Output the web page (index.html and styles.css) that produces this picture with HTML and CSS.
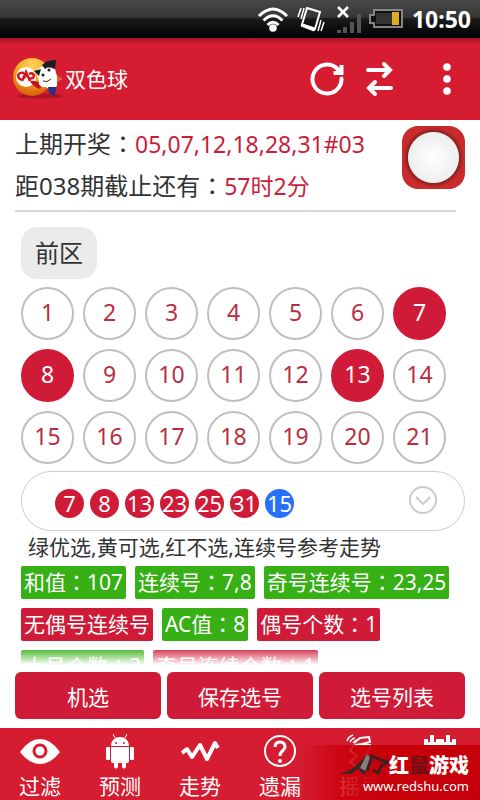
FILE: index.html
```html
<!DOCTYPE html>
<html lang="zh-CN">
<head>
  <meta charset="UTF-8">
  <meta name="viewport" content="width=device-width, initial-scale=1.0">
  <title>双色球</title>
  <link rel="stylesheet" href="styles.css">
</head>
<body>
  <!-- Status bar -->
  <div class="status-bar">
    <svg width="32" height="28" viewBox="0 0 32 28" fill="none" stroke="#fff" stroke-width="3">
      <path d="M2 11Q16 -3 30 11"/>
      <path d="M6.500 15.500Q16 6 25.500 15.500"/>
      <path d="M10.500 20Q16 14.500 21.500 20"/>
      <circle cx="16" cy="23" r="3.800" fill="#fff" stroke="none"/>
    </svg>
    <svg class="vibrate" width="28" height="28" viewBox="0 0 28 28" fill="none" stroke="#fff">
      <path d="M10 3L23 7L18 24L5 19.500Z" stroke-width="2"/>
      <path d="M5 19L18 23L17 26L4 21Z" fill="#fff"/>
      <path d="M4 3L1 12M7 3L4 14M24 15L21 26M27 17L24 26" stroke-width="1.500"/>
    </svg>
    <svg class="signal" width="28" height="29" viewBox="0 0 28 29">
      <path d="M2 25h4v3h-4zM8 22h4v6h-4zM15 17h4v11h-4zM22 9h4v19h-4z" fill="#555"/>
      <path d="M3 2L13 12M13 2L3 12" stroke="#fff" stroke-width="2.500"/>
    </svg>
    <svg class="battery" width="35" height="22" viewBox="0 0 35 22">
      <path d="M5 2H33V19H5V15H1V7H5Z" fill="#111" stroke="#858585" stroke-width="2"/>
      <path d="M7 5h16v11h-16z" fill="#333"/>
      <path d="M23 4h7v13h-7z" fill="#e2aa20"/>
    </svg>
    <span class="clock">10:50</span>
  </div>

  <!-- Title bar -->
  <header class="title-bar">
    <svg class="logo" width="53" height="44" viewBox="0 0 53 44">
      <defs>
        <radialGradient id="ball" cx="50%" cy="18%" r="85%">
          <stop offset="0" stop-color="#ffd45a"/>
          <stop offset="0.5" stop-color="#f7a521"/>
          <stop offset="1" stop-color="#d85508"/>
        </radialGradient>
      </defs>
      <ellipse cx="28" cy="39" rx="23" ry="2.500" fill="#9c1222" opacity="0.7"/>
      <circle cx="20" cy="20" r="19" fill="url(#ball)"/>
      <circle cx="14" cy="20" r="10" fill="#fff"/>
      <path d="M12 16C7 15 5 18 7 21C9 24 12 22 14 18M10 24L14 15L18 24M17 17C21 15 23 18 21 21L17 22" fill="none" stroke="#d51622" stroke-width="2.500"/>
      <path d="M18 24Q23 23 30 27L28 32Q20 29 18 24" fill="#c91020"/>
      <path d="M24 14Q28 8 35 10L43 12L45 19L49 22L45 25Q46 31 42 30L39 34L34 30Q26 31 27 24Z" fill="#fff"/>
      <path d="M30 8Q35 3 44 3L43 12Q38 8 33 12Z" fill="#172025"/>
      <path d="M22 14L29 12L27 19Z" fill="#172025"/>
      <path d="M45 18L51 22L45 25Z" fill="#ec5d30"/>
      <path d="M36 30L44 30L43 39Q36 37 36 30" fill="#23318f"/>
      <circle cx="31" cy="18" r="1.500" fill="#172025"/>
      <circle cx="37" cy="13" r="1.500" fill="#172025"/>
      <path d="M31 24Q35 26 39 22" fill="none" stroke="#333"/>
    </svg>
    <h1>双色球</h1>
    <div class="actions">
      <button class="icon-button" aria-label="刷新">
        <svg width="36" height="36" viewBox="0 0 36 36" fill="none" stroke="#fff" stroke-width="4" stroke-linecap="round">
          <path d="M32.500 17.500A14.500 14.500 0 1 1 28 7.500L31 11"/>
          <path d="M32.500 4V12H24.500" stroke-linecap="butt"/>
        </svg>
      </button>
      <button class="icon-button" aria-label="切换">
        <svg width="28" height="36" viewBox="0 0 28 36" fill="none" stroke="#fff" stroke-width="4" stroke-linecap="round">
          <path d="M3 9H25M19 3L25 9L19 15M26 27H4M10 21L4 27L10 33"/>
        </svg>
      </button>
      <button class="icon-button more" aria-label="更多">
        <svg width="10" height="36" viewBox="0 0 10 36" fill="#fff">
          <circle cx="5" cy="6" r="3.800"/>
          <circle cx="5" cy="18" r="3.800"/>
          <circle cx="5" cy="30" r="3.800"/>
        </svg>
      </button>
    </div>
  </header>

  <main class="content">
    <section class="draw">
      <div class="draw-info">
        <p>上期开奖<span class="colon" lang="zh-TW">：</span><span class="value">05,07,12,18,28,31#03</span></p>
        <p>距038期截止还有<span class="colon" lang="zh-TW">：</span><span class="value">57时2分</span></p>
      </div>
      <button class="round-button" aria-label="摇号"></button>
    </section>

    <section class="numbers">
      <h2 class="zone">前区</h2>
      <div class="balls">
        <button class="ball">1</button>
        <button class="ball">2</button>
        <button class="ball">3</button>
        <button class="ball">4</button>
        <button class="ball">5</button>
        <button class="ball">6</button>
        <button class="ball selected">7</button>
        <button class="ball selected">8</button>
        <button class="ball">9</button>
        <button class="ball">10</button>
        <button class="ball">11</button>
        <button class="ball">12</button>
        <button class="ball selected">13</button>
        <button class="ball">14</button>
        <button class="ball">15</button>
        <button class="ball">16</button>
        <button class="ball">17</button>
        <button class="ball">18</button>
        <button class="ball">19</button>
        <button class="ball">20</button>
        <button class="ball">21</button>
      </div>
    </section>

    <section class="picked">
      <span class="pick">7</span>
      <span class="pick">8</span>
      <span class="pick">13</span>
      <span class="pick">23</span>
      <span class="pick">25</span>
      <span class="pick">31</span>
      <span class="pick blue">15</span>
      <button class="icon-button expand" aria-label="展开">
        <svg width="30" height="30" viewBox="0 0 30 30" fill="none" stroke="#ccc" stroke-width="2">
          <circle cx="15" cy="15" r="13"/>
          <path d="M8 12L15 19L22 12"/>
        </svg>
      </button>
    </section>

    <p class="hint">绿优选,黄可选,红不选,连续号参考走势</p>

    <div class="tags">
      <span class="tag green">和值<span class="colon" lang="zh-TW">：</span>107</span>
      <span class="tag green">连续号<span class="colon" lang="zh-TW">：</span>7,8</span>
      <span class="tag green">奇号连续号<span class="colon" lang="zh-TW">：</span>23,25</span>
      <span class="tag">无偶号连续号</span>
      <span class="tag green">AC值<span class="colon" lang="zh-TW">：</span>8</span>
      <span class="tag">偶号个数<span class="colon" lang="zh-TW">：</span>1</span>
      <span class="tag green">大号个数<span class="colon" lang="zh-TW">：</span>3</span>
      <span class="tag">奇号连续个数<span class="colon" lang="zh-TW">：</span>1</span>
    </div>

    <div class="buttons">
      <button>机选</button>
      <button>保存选号</button>
      <button>选号列表</button>
    </div>
  </main>

  <!-- Bottom navigation -->
  <nav class="bottom-nav">
    <a href="#filter">
      <svg width="42" height="36" viewBox="0 0 42 36">
        <path d="M1 19Q10 6 21 6T41 19Q32 31 21 31T1 19Z" fill="#fff"/>
        <circle cx="21" cy="18" r="6" fill="none" stroke="#d51c31" stroke-width="3"/>
      </svg>
      过滤
    </a>
    <a href="#predict">
      <svg width="32" height="36" viewBox="0 0 32 36" fill="#fff">
        <path d="M7 13C7 1 25 1 25 13ZM7 14H25V28Q25 30 22 30V34Q20 37 18 34V30H14V34Q12 37 10 34V30Q7 30 7 28Z"/>
        <rect x="2" y="14" width="4" height="13" rx="1"/>
        <rect x="26" y="14" width="4" height="13" rx="1"/>
        <path d="M11 5L9 1M21 5L23 1" stroke="#fff"/>
        <circle cx="12" cy="10" r="1" fill="#d51c31"/>
        <circle cx="20" cy="10" r="1" fill="#d51c31"/>
      </svg>
      预测
    </a>
    <a href="#trend">
      <svg width="40" height="36" viewBox="0 0 40 36" fill="none" stroke="#fff" stroke-width="4" stroke-linejoin="round">
        <path d="M2 20L7 16L12 24L20 12L27 26L35 10L38 15"/>
      </svg>
      走势
    </a>
    <a href="#missing">
      <svg width="34" height="36" viewBox="0 0 34 36" fill="none" stroke="#fff">
        <circle cx="17" cy="18" r="15" stroke-width="2"/>
        <path d="M12 14Q12 9 17 9T22 14C22 18 17 17 17 23" stroke-width="3"/>
        <circle cx="17" cy="28" r="2" fill="#fff" stroke="none"/>
      </svg>
      遗漏
    </a>
    <a href="#shake">
      <svg width="40" height="36" viewBox="0 0 40 36" fill="none" stroke="#fff" stroke-width="2">
        <path d="M7 8Q8 4 13 2M10 9Q11 6 15 5M13 10Q14 8 17 7" stroke-width="1.500"/>
        <path d="M14 10L20 5L29 4L30 9L22 11L15 12H31"/>
        <path d="M14 12L10 18L17 23L10 29L17 34M31 13L25 22L28 30"/>
      </svg>
      摇号
    </a>
    <a href="#calendar" aria-label="日历">
      <svg width="34" height="36" viewBox="0 0 34 36">
        <path d="M1 6H33V34H1Z" fill="#fff"/>
        <path d="M9 2V9M25 2V9" stroke="#d51c31" stroke-width="8"/>
        <path d="M9 2V9M25 2V9" stroke="#fff" stroke-width="4"/>
      </svg>
    </a>
    <div class="badge">
      <div class="badge-name">
        <svg width="50" height="26" viewBox="0 0 50 26">
          <path d="M0 21Q15 18 28 1L34 7L25 22L19 16L12 21Z" fill="#3b2525"/>
          <path d="M28 1L33 7L27 18L21 15Z" fill="#858080"/>
          <path d="M28 18L33 3L42 7L49 9L43 12L39 20L34 17" fill="none" stroke="#3b2020" stroke-width="3"/>
        </svg>
        <strong>红<span class="dark">鼠</span>游戏</strong>
      </div>
      <span class="url">www.redshu.com</span>
    </div>
  </nav>
</body>
</html>
```

FILE: styles.css
```css
* {
  box-sizing: border-box;
}
body {
  font-family: "Noto Sans", "Noto Sans CJK SC", sans-serif;
  font-size: 21px;
  margin: 0;
  min-height: 100vh;
  display: flex;
  flex-direction: column;
  background: #fff;
  color: #333;
}
h1, h2, p {
  margin: 0;
  font-weight: normal;
}
button {
  font: inherit;
  padding: 0;
  border: none;
  cursor: pointer;
}
svg {
  display: block;
  flex-shrink: 0;
}
.colon {
  font-family: "Noto Sans", "Noto Sans CJK TC", sans-serif;
}

/* Status bar */
.status-bar {
  height: 38px;
  padding: 0 9px 0 0;
  display: flex;
  justify-content: flex-end;
  align-items: center;
  background: linear-gradient(#484848, #353535 45%, #1a1a1a 50%, #000);
  color: #fff;
}
.vibrate {
  margin-left: 8px;
}
.signal {
  margin-left: 10px;
}
.battery {
  margin-left: 6px;
}
.clock {
  margin-left: 8px;
  font-size: 23px;
  font-weight: bold;
}

/* Title bar */
.title-bar {
  height: 82px;
  padding: 0 28px 0 12px;
  display: flex;
  align-items: center;
  background: linear-gradient(#a01525, #d51c31 6px);
  color: #fff;
}
h1 {
  font-size: 21px;
  line-height: 32px;
}
.actions {
  display: flex;
  margin-left: auto;
}
.icon-button {
  background: none;
}
.actions .icon-button {
  margin-left: 20px;
}
.actions .more {
  margin-left: 49px;
}

/* Content */
.content {
  flex: 1;
  padding: 0 15px 9px;
  display: flex;
  flex-direction: column;
}
.draw {
  display: flex;
  justify-content: space-between;
}
.draw-info {
  flex: 1;
  font-size: 24px;
  line-height: 42px;
  padding: 3px 0;
  white-space: nowrap;
}
.draw-info .colon,
.value {
  line-height: 1;
}
.value {
  color: #c81e3a;
  font-size: 23px;
}
.round-button {
  width: 63px;
  height: 63px;
  margin-top: 6px;
  border-radius: 16px;
  background: radial-gradient(circle, #fff, #eee 25px, #8c2020 26px, #c92a2c 30px);
}
.numbers {
  margin: 0 9px 0 0;
  padding: 15px 0 0 6px;
  border-top: 2px solid #d8d8d8;
}
.zone {
  width: fit-content;
  padding: 8px 14px;
  border-radius: 16px;
  background: #ebebeb;
  font-size: 24px;
  line-height: 36px;
}
.balls {
  display: grid;
  grid-template-columns: repeat(7, 53px);
  gap: 9px;
  margin-top: 8px;
}
.ball {
  height: 53px;
  padding-bottom: 4px;
  border: 2px solid #bfbfbf;
  border-radius: 50%;
  background: #fff;
  color: #b82e40;
  font-size: 23px;
}
.ball.selected {
  border-color: #d01b38;
  background: #d01b38;
  color: #fff;
}
.picked {
  display: flex;
  align-items: center;
  gap: 6px;
  height: 60px;
  margin: 7px 0 0 6px;
  padding: 4px 26px 0 33px;
  border: 1px solid #ccc;
  border-radius: 30px;
}
.pick {
  width: 29px;
  height: 29px;
  border-radius: 50%;
  background: #d01b38;
  color: #fff;
  font-size: 22px;
  line-height: 29px;
  display: flex;
  justify-content: center;
}
.pick.blue {
  background: #2870fa;
}
.expand {
  margin: 0 0 6px auto;
}
.hint {
  padding-left: 13px;
  line-height: 32px;
}
.tags {
  position: relative;
  display: flex;
  flex-wrap: wrap;
  gap: 9px;
  height: 99px;
  margin: 3px 0 0 6px;
  overflow: hidden;
}
/* Fade out the last visible row */
.tags::after {
  content: "";
  position: absolute;
  left: 0;
  right: 0;
  bottom: 0;
  height: 16px;
  background: linear-gradient(rgba(255, 255, 255, 0.1), #fff);
}
.tag {
  height: 33px;
  padding: 0 3px;
  border-radius: 2px;
  background: #d01b38;
  color: #fff;
  line-height: 33px;
  white-space: nowrap;
}
.tag.green {
  background: #36b014;
}
.buttons {
  display: grid;
  grid-template-columns: repeat(3, 1fr);
  gap: 6px;
  margin-top: auto;
}
.buttons button {
  height: 47px;
  border-radius: 6px;
  background: #d01b38;
  color: #fff;
}

/* Bottom navigation */
.bottom-nav {
  position: relative;
  display: grid;
  grid-template-columns: repeat(6, 1fr);
  height: 72px;
  background: #d51c31;
}
.bottom-nav a {
  display: flex;
  flex-direction: column;
  align-items: center;
  gap: 4px;
  padding-top: 5px;
  color: #fff;
  line-height: 26px;
  text-decoration: none;
}
.badge {
  position: absolute;
  right: 0;
  bottom: 0;
  height: 55px;
  width: 180px;
  padding: 8px 11px 0 0;
  display: flex;
  flex-direction: column;
  align-items: flex-end;
  background: linear-gradient(90deg, rgba(204, 0, 10, 0), rgba(204, 0, 10, 0.8) 22%, #c8000a 45%, #c4000a);
  color: #fff;
}
.badge-name {
  display: flex;
}
.badge strong {
  font-size: 20px;
  font-weight: 900;
  line-height: 26px;
}
.badge .dark {
  color: #701010;
}
.url {
  font-size: 13px;
  line-height: 14px;
}
```
